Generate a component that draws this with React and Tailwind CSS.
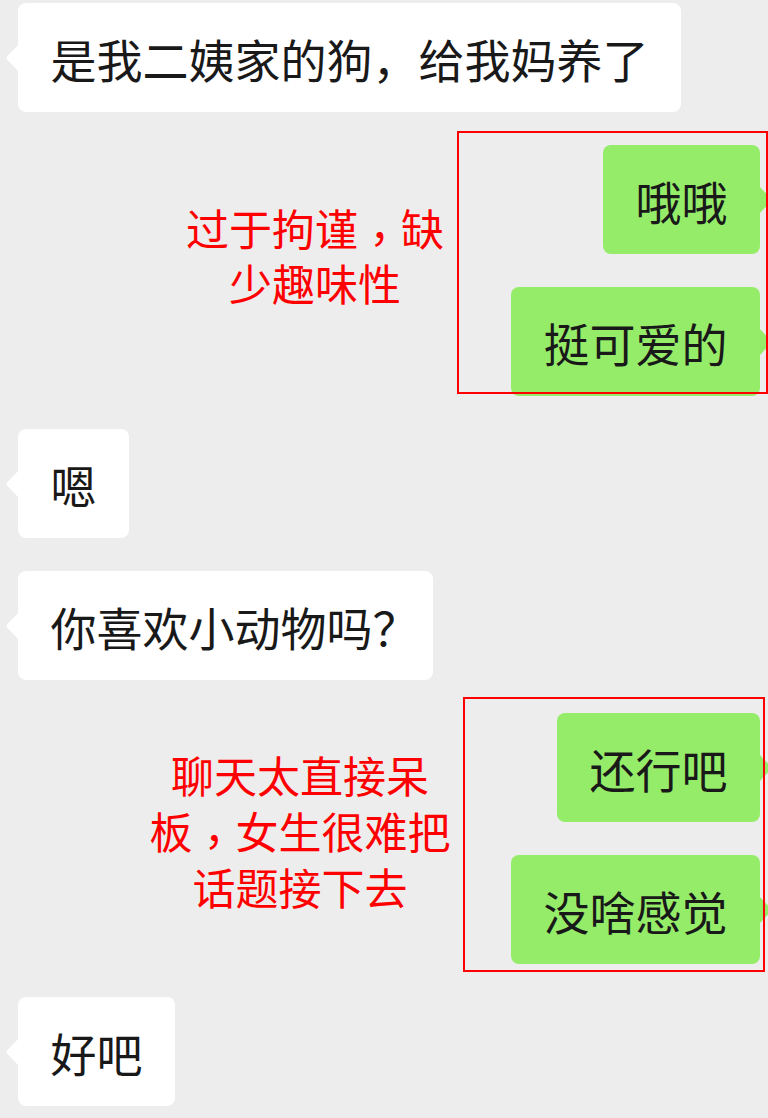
import React from "react";

const FONT = { fontFamily: '"Noto Sans CJK SC", "Noto Sans", sans-serif' };
const TC = { fontFamily: '"Noto Sans CJK TC", sans-serif' };

function LeftBubble({ children }) {
  return (
    <div className="flex pl-[18px]">
      <div className="relative bg-white rounded-[8px] h-[109px] px-[32.5px] flex items-center text-[46px] leading-[46px] text-[#191919] whitespace-nowrap">
        <svg
          className="absolute left-[-13px] top-1/2 -translate-y-1/2"
          width="14"
          height="28"
          viewBox="0 0 14 28"
        >
          <path d="M14 0 L14 28 L2.5 16 Q0.5 14 2.5 12 Z" fill="#ffffff" />
        </svg>
        <span>{children}</span>
      </div>
    </div>
  );
}

function RightBubble({ children }) {
  return (
    <div className="flex justify-end pr-[8px]">
      <div className="relative bg-[#95ec69] rounded-[8px] h-[109px] px-[32.5px] flex items-center text-[46px] leading-[46px] text-[#191919] whitespace-nowrap">
        <span>{children}</span>
        <svg
          className="absolute right-[-13px] top-1/2 -translate-y-1/2"
          width="14"
          height="28"
          viewBox="0 0 14 28"
        >
          <path d="M0 0 L0 28 L11.5 16 Q13.5 14 11.5 12 Z" fill="#95ec69" />
        </svg>
      </div>
    </div>
  );
}

// centred full-width comma, dropped toward the baseline
function Comma() {
  return (
    <span className="inline-block leading-[24px] translate-y-[9px]" style={TC}>
      ，
    </span>
  );
}

export default function App() {
  return (
    <div
      className="relative w-[768px] h-[1118px] overflow-hidden bg-[#ededed]"
      style={FONT}
    >
      <div className="flex flex-col gap-[33px] pt-[3px]">
        <LeftBubble>是我二姨家的狗，给我妈养了</LeftBubble>
        <RightBubble>哦哦</RightBubble>
        <RightBubble>挺可爱的</RightBubble>
        <LeftBubble>嗯</LeftBubble>
        <LeftBubble>
          你喜欢小动物吗<span className="tracking-[-18px]">？</span>
        </LeftBubble>
        <RightBubble>还行吧</RightBubble>
        <RightBubble>没啥感觉</RightBubble>
        <LeftBubble>好吧</LeftBubble>
      </div>

      {/* annotation frames */}
      <div className="absolute left-[457px] top-[131px] w-[311px] h-[263px] border-2 border-[#ff0000]" />
      <div className="absolute left-[463px] top-[697px] w-[302px] h-[275px] border-2 border-[#ff0000]" />

      {/* annotation notes */}
      <div className="absolute left-[165px] top-[200px] w-[300px] text-center text-[43px] leading-[55px] text-[#ff0000] whitespace-nowrap">
        <div>
          过于拘谨<Comma />缺
        </div>
        <div>少趣味性</div>
      </div>
      <div className="absolute left-[140px] top-[746px] w-[320px] text-center text-[43px] leading-[56px] text-[#ff0000] whitespace-nowrap">
        <div>聊天太直接呆</div>
        <div>
          板<Comma />女生很难把
        </div>
        <div>话题接下去</div>
      </div>
    </div>
  );
}
